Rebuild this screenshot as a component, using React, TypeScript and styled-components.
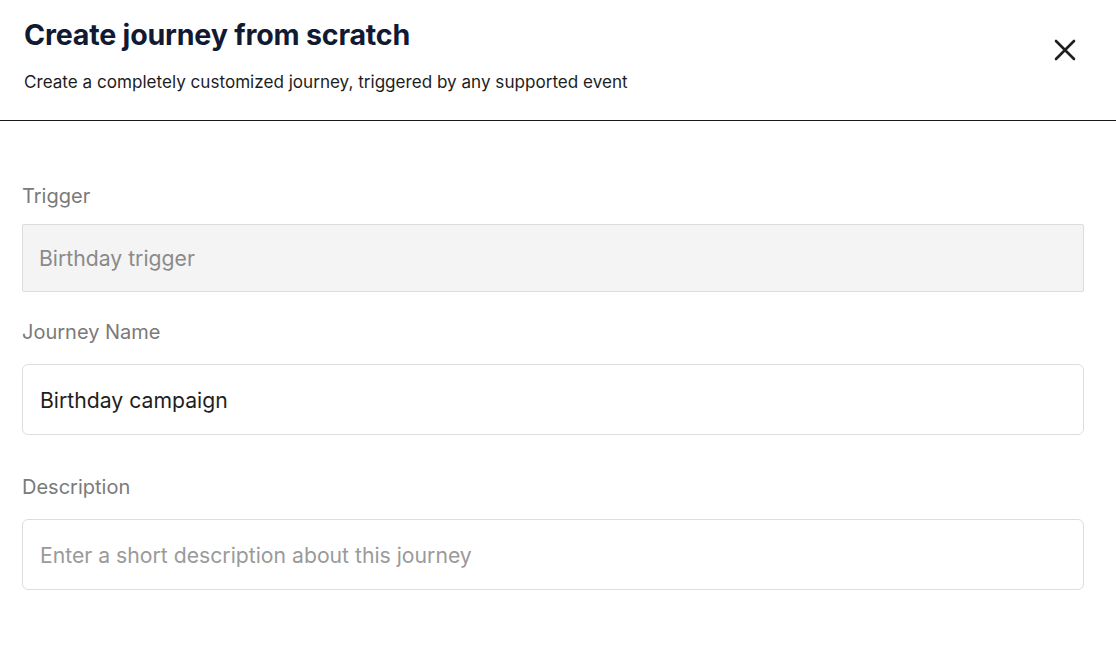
import React from "react";
import styled, { createGlobalStyle } from "styled-components";

const GlobalStyle = createGlobalStyle`
  body {
    margin: 0;
    background: #ffffff;
    font-family: Inter, "Open Sans", sans-serif;
  }
`;

const App = () => {
  return (
    <>
      <GlobalStyle />
      <Modal>
        <Header>
          <HeaderText>
            <Title>Create journey from scratch</Title>
            <Subtitle>
              Create a completely customized journey, triggered by any supported event
            </Subtitle>
          </HeaderText>
          <CloseButton aria-label="Close">
            <svg width="22" height="22" viewBox="0 0 22 22" fill="none">
              <path
                d="M2 2L20 20M20 2L2 20"
                stroke="#1f1f1f"
                strokeWidth="2.6"
                strokeLinecap="round"
              />
            </svg>
          </CloseButton>
        </Header>
        <Body>
          <Field $top={62}>
            <Label>Trigger</Label>
            <ReadOnlyBox>Birthday trigger</ReadOnlyBox>
          </Field>
          <Field $top={27}>
            <Label>Journey Name</Label>
            <Input defaultValue="Birthday campaign" />
          </Field>
          <Field $top={39}>
            <Label>Description</Label>
            <Input placeholder="Enter a short description about this journey" />
          </Field>
        </Body>
      </Modal>
    </>
  );
};

export default App;

const Modal = styled.div`
  width: 1116px;
  height: 670px;
  background: #fff;
  display: flex;
  flex-direction: column;
`;

const Header = styled.div`
  display: flex;
  justify-content: space-between;
  align-items: flex-start;
  padding: 16px 40px 0 24px;
  height: 104px;
  border-bottom: 1px solid #1a1a1a;
`;

const HeaderText = styled.div`
  display: flex;
  flex-direction: column;
`;

const Title = styled.div`
  font-size: 28.6px;
  font-weight: 700;
  color: #121a33;
  line-height: 38px;
  letter-spacing: -0.2px;
`;

const Subtitle = styled.div`
  margin-top: 16px;
  font-size: 17.1px;
  color: #1d1d1f;
  line-height: 24px;
`;

const CloseButton = styled.button`
  border: none;
  background: none;
  padding: 0;
  margin-top: 23px;
  width: 22px;
  height: 22px;
  cursor: pointer;
  display: flex;
`;

const Body = styled.div`
  display: flex;
  flex-direction: column;
  padding: 0 32px 0 22px;
`;

const Field = styled.div<{ $top: number }>`
  display: flex;
  flex-direction: column;
  margin-top: ${(p) => p.$top}px;
`;

const Label = styled.div`
  font-size: 20px;
  color: #7a7a7a;
  line-height: 26px;
`;

const ReadOnlyBox = styled.div`
  margin-top: 15px;
  height: 68px;
  box-sizing: border-box;
  background: #f4f4f4;
  border: 1px solid #dcdcdc;
  border-radius: 2px;
  padding: 0 16px;
  display: flex;
  align-items: center;
  font-size: 21.2px;
  color: #8a8a8a;
`;

const Input = styled.input`
  margin-top: 19px;
  height: 71px;
  box-sizing: border-box;
  border: 1px solid #dddddd;
  border-radius: 6px;
  padding: 0 17px;
  font-family: Inter, "Open Sans", sans-serif;
  font-size: 21.2px;
  color: #1e1e1e;
  background: #fff;
  outline: none;
  &::placeholder {
    color: #9a9a9a;
  }
`;
